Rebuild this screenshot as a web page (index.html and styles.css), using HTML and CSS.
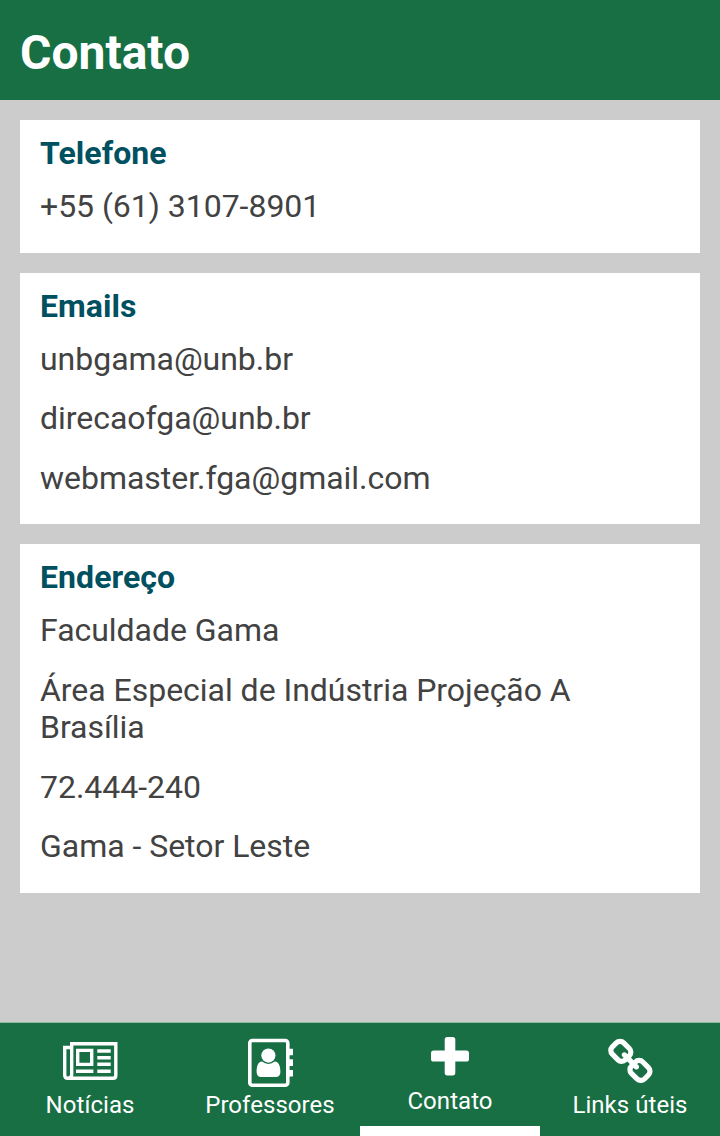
FILE: index.html
```
<!DOCTYPE html>
<html lang="pt-BR">
<head>
<meta charset="utf-8">
<title>Contato</title>
<link rel="stylesheet" href="styles.css">
</head>
<body>
<header class="header"><h1 class="title">Contato</h1></header>
<main class="content">
  <section class="card">
    <h2 class="heading">Telefone</h2>
    <p class="line">+55 (61) 3107-8901</p>
  </section>
  <section class="card">
    <h2 class="heading">Emails</h2>
    <p class="line">unbgama@unb.br</p>
    <p class="line">direcaofga@unb.br</p>
    <p class="line">webmaster.fga@gmail.com</p>
  </section>
  <section class="card">
    <h2 class="heading">Endereço</h2>
    <p class="line">Faculdade Gama</p>
    <p class="line">Área Especial de Indústria Projeção A<br>Brasília</p>
    <p class="line">72.444-240</p>
    <p class="line">Gama - Setor Leste</p>
  </section>
</main>
<nav class="tabs">
  <a class="tab">
    <svg class="icon" width="56" height="52" viewBox="0 0 56 52"><g fill="none" stroke="#fff" stroke-width="3.400"><path d="M9.700 38.500V7.700H53.800V39.500Q53.800 42.300 51 42.300H5.800Q2.700 42.300 2.700 39V11.500H9.700V38.500Q9.700 42.300 6 42.300"/><path d="M15.700 14.400H29.700V28.400H15.700ZM35.300 15H48.700M35.300 21.700H48.700M35.300 28.300H48.700M14 35.300H31.400M35.300 35.300H48.700"/></g></svg>
    <span class="label">Notícias</span>
  </a>
  <a class="tab">
    <svg class="icon" width="48" height="52" viewBox="0 0 48 52"><rect x="3.800" y="4.500" width="38" height="44.700" rx="2.500" fill="none" stroke="#fff" stroke-width="3.600"/><path fill="#fff" d="M43 12.700h3.500q.5 0 .5.500v5.600q0 .5-.5.500H43zM43 23.300h3.500q.5 0 .5.500v5.700q0 .5-.5.500H43zM43 34h3.500q.5 0 .5.500v5.600q0 .5-.5.500H43z"/><circle cx="22.400" cy="19.600" r="7.100" fill="#fff"/><path fill="#fff" d="M16 25.600Q22.400 30.400 28.800 25.600C33.200 25.800 34.400 31 34.400 36C34.400 39 32.500 41 30 41H15C12.400 41 10.600 39 10.600 36C10.600 31 11.700 25.800 16 25.600Z"/></svg>
    <span class="label">Professores</span>
  </a>
  <a class="tab active">
    <svg class="icon" width="40" height="52" viewBox="0 0 40 52"><path fill="#fff" d="M17.300 6h5.400q2.600 0 2.600 2.600v11h11.100q2.600 0 2.600 2.600v5.800q0 2.600-2.600 2.600H25.300v11.200q0 2.600-2.600 2.600h-5.400q-2.600 0-2.600-2.600V30.600H3.600q-2.600 0-2.600-2.600v-5.800q0-2.600 2.600-2.600h11.100v-11q0-2.600 2.600-2.600z"/></svg>
    <span class="label">Contato</span>
  </a>
  <a class="tab">
    <svg class="icon" width="46" height="52" viewBox="0 0 46 52"><path fill="#fff" transform="translate(1.200 2.700) scale(.0272) translate(-16 -16)" d="M1456 1216q0-40-28-68l-208-208q-28-28-68-28-42 0-72 32 3 3 19 18.500t21.500 21.500 15 19 13 25.500 3.500 27.500q0 40-28 68t-68 28q-15 0-27.500-3.500t-25.500-13-19-15-21.500-21.500-18.500-19q-33 31-33 73 0 40 28 68l206 207q27 27 68 27 40 0 68-26l147-146q28-28 28-67zm-703-705q0-40-28-68l-206-207q-28-28-68-28-39 0-68 27l-147 146q-28 28-28 67 0 40 28 68l208 208q27 27 68 27 42 0 72-31-3-3-19-18.500t-21.500-21.500-15-19-13-25.500-3.500-27.500q0-40 28-68t68-28q15 0 27.500 3.500t25.500 13 19 15 21.500 21.500 18.500 19q33-31 33-73zm895 705q0 120-85 203l-147 146q-83 83-203 83-121 0-204-85l-206-207q-83-83-83-203 0-123 88-209l-88-88q-86 88-208 88-120 0-204-84l-208-208q-84-84-84-204t85-203l147-146q83-83 203-83 121 0 204 85l206 207q83 83 83 203 0 123-88 209l88 88q86-88 208-88 120 0 204 84l208 208q84 84 84 204z"/></svg>
    <span class="label">Links úteis</span>
  </a>
</nav>
</body>
</html>
```
FILE: styles.css
```
* { box-sizing: border-box; }
body { margin: 0; height: 1136px; display: flex; flex-direction: column; background: #cccccc; font-family: Roboto, sans-serif; color: #424242; }
.header { height: 100px; padding: 25px 20px; background: #176f43; }
.title { margin: 0; color: #fff; font-size: 48px; line-height: 56px; font-weight: 700; }
.content { flex: 1; padding: 20px; display: flex; flex-direction: column; gap: 20px; }
.card { background: #fff; padding: 14px 20px 27px; }
.heading { margin: 0 0 16px; color: #00505f; font-size: 32px; line-height: 38px; font-weight: 700; letter-spacing: .06px; }
.line { margin: 0 0 22px; font-size: 32px; line-height: 37.5px; letter-spacing: -.03px; }
.line:last-child { margin-bottom: 0; }
.tabs { height: 114px; display: grid; grid-template-columns: repeat(4, 1fr); background: #176f43; color: #fff; border-top: 1px solid #8fbb9f; }
.tab { display: flex; flex-direction: column; align-items: center; padding-top: 13px; }
.active { padding-top: 8px; border-bottom: 10px solid #fff; }
.icon { display: block; }
.label { font-size: 24px; line-height: 28px; margin-top: 3px; letter-spacing: .05px; }
.active .label { margin-top: 4px; }
```
